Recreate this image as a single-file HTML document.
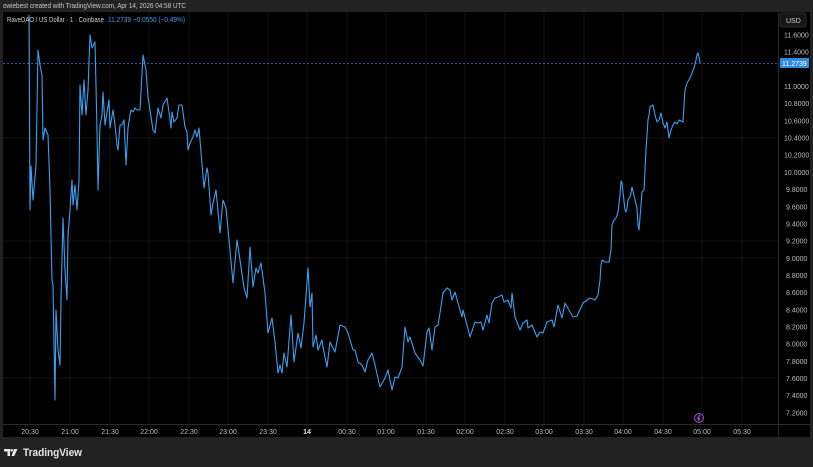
<!DOCTYPE html>
<html><head><meta charset="utf-8"><style>
html,body{margin:0;padding:0;background:#222223;width:813px;height:467px;overflow:hidden;font-family:"Liberation Sans",sans-serif}
svg{position:absolute;left:0;top:0}
</style></head><body>
<svg width="813" height="467" viewBox="0 0 813 467" font-family="Liberation Sans, sans-serif">
<text x="3" y="8" font-size="7" fill="#c8c8c8" textLength="183" lengthAdjust="spacingAndGlyphs">owiebest created with TradingView.com, Apr 14, 2026 04:58 UTC</text>
<rect x="3" y="12" width="807" height="425" fill="#000"/>
<g stroke="#121212" stroke-width="1">
<line x1="30" y1="12" x2="30" y2="424"/><line x1="70" y1="12" x2="70" y2="424"/><line x1="110" y1="12" x2="110" y2="424"/><line x1="149" y1="12" x2="149" y2="424"/><line x1="189" y1="12" x2="189" y2="424"/><line x1="228" y1="12" x2="228" y2="424"/><line x1="268" y1="12" x2="268" y2="424"/><line x1="307" y1="12" x2="307" y2="424"/><line x1="347" y1="12" x2="347" y2="424"/><line x1="386" y1="12" x2="386" y2="424"/><line x1="426" y1="12" x2="426" y2="424"/><line x1="465" y1="12" x2="465" y2="424"/><line x1="505" y1="12" x2="505" y2="424"/><line x1="544" y1="12" x2="544" y2="424"/><line x1="584" y1="12" x2="584" y2="424"/><line x1="623" y1="12" x2="623" y2="424"/><line x1="663" y1="12" x2="663" y2="424"/><line x1="702" y1="12" x2="702" y2="424"/><line x1="742" y1="12" x2="742" y2="424"/>
<line x1="3" y1="138" x2="778" y2="138"/><line x1="3" y1="241" x2="778" y2="241"/><line x1="3" y1="258" x2="778" y2="258"/><line x1="3" y1="378" x2="778" y2="378"/>
</g>
<line x1="3" y1="424.5" x2="810" y2="424.5" stroke="#2a2a2a"/>
<line x1="778.5" y1="12" x2="778.5" y2="437" stroke="#2a2a2a"/>
<line x1="3" y1="63.5" x2="778" y2="63.5" stroke="#2a7fd0" stroke-dasharray="2,2" stroke-width="0.8"/>
<polyline fill="none" stroke="#3b9ff0" stroke-width="1.1" stroke-linejoin="round" points="29,15 30,210 31,166 33,200 36,165 38,50 40,65 42,75 43,140 45,128 48,135 50,190 52,280 53,285 55,400 56,310 58,350 60,365 61,300 63,218 65,270 67,300 68,235 70,210 72,180 73,205 75,185 77,210 79,180 80,85 82,115 84,80 86,115 88,90 90,35 92,48 95,42 97,130 98,190 100,125 102,115 103,92 105,125 107,112 109,100 110,128 113,110 115,125 117,145 118,150 120,125 122,125 124,120 126,165 128,128 130,115 131,110 133,112 135,108 137,110 140,110 143,55 146,70 148,97 153,130 155,133 158,108 161,118 163,105 167,98 169,112 171,128 172,112 174,122 177,118 179,105 182,105 185,127 187,132 188,150 190,143 193,137 195,130 197,137 199,128 204,188 207,168 208,173 211,215 213,203 216,190 220,233 223,200 226,208 229,240 233,283 237,240 240,260 244,288 247,298 250,247 253,287 256,268 258,273 261,263 265,293 268,333 272,318 275,342 278,373 280,365 282,373 284,353 287,367 291,315 294,362 298,333 301,348 304,323 308,268 310,307 312,293 313,347 316,335 318,350 322,340 323,347 327,367 330,342 335,352 340,325 345,327 348,333 353,350 355,350 358,362 362,365 365,372 368,360 372,353 375,365 380,387 385,378 388,370 392,390 395,377 398,378 402,367 405,327 408,342 410,337 415,353 420,360 423,366 427,332 429,328 432,350 435,327 438,325 440,313 443,293 447,288 450,290 452,300 455,292 458,303 462,317 463,310 467,325 470,337 475,322 478,323 481,322 483,330 487,315 489,323 492,303 495,298 498,297 502,295 504,302 508,300 511,308 512,293 515,317 520,330 523,323 527,320 528,328 532,325 537,337 540,332 543,333 547,322 552,320 554,327 558,305 562,318 565,303 570,312 573,317 577,316 583,303 590,298 595,300 598,295 600,280 601,265 602,260 605,262 607,262 609,262 611,250 612,225 614,220 616,218 618,212 620,195 621,181 622,183 625,210 626,212 627,208 628,200 630,197 631,193 632,187 635,200 637,208 638,225 639,230 641,205 642,192 644,190 646,150 648,120 649,115 650,107 653,105 655,115 657,122 659,120 661,113 663,123 665,128 667,122 669,138 671,130 673,125 675,122 677,124 679,120 683,122 685,90 687,83 690,78 692,73 694,68 696,60 697,55 698,53 700,62 700,63"/>
<text x="7" y="22" font-size="7" fill="#d0d0d0" textLength="97" lengthAdjust="spacingAndGlyphs">RaveDAO / US Dollar · 1 · Coinbase</text>
<text x="108" y="22" font-size="7" fill="#3b9ff0" textLength="77" lengthAdjust="spacingAndGlyphs">11.2739  −0.0550 (−0.49%)</text>
<rect x="780" y="13" width="26" height="14" rx="2" fill="#161616" stroke="#2a2a2a"/>
<text x="786" y="23" font-size="7" fill="#cfcfcf">USD</text>
<g font-size="7" fill="#bdbdbd">
<text x="784" y="37.5">11.6000</text><text x="784" y="54.7">11.4000</text><text x="784" y="89">11.0000</text><text x="784" y="106.2">10.8000</text><text x="784" y="123.4">10.6000</text><text x="784" y="140.6">10.4000</text><text x="784" y="157.7">10.2000</text><text x="784" y="174.9">10.0000</text><text x="786" y="192.1">9.8000</text><text x="786" y="209.3">9.6000</text><text x="786" y="226.4">9.4000</text><text x="786" y="243.6">9.2000</text><text x="786" y="260.8">9.0000</text><text x="786" y="278">8.8000</text><text x="786" y="295.1">8.6000</text><text x="786" y="312.3">8.4000</text><text x="786" y="329.5">8.2000</text><text x="786" y="346.7">8.0000</text><text x="786" y="363.8">7.8000</text><text x="786" y="381">7.6000</text><text x="786" y="398.2">7.4000</text><text x="786" y="415.4">7.2000</text>
</g>
<rect x="780" y="58" width="29" height="10" fill="#2f8be0"/>
<text x="782" y="66" font-size="7" fill="#fff">11.2739</text>
<g font-size="7" fill="#bdbdbd" text-anchor="middle">
<text x="30" y="434">20:30</text><text x="70" y="434">21:00</text><text x="110" y="434">21:30</text><text x="149" y="434">22:00</text><text x="189" y="434">22:30</text><text x="228" y="434">23:00</text><text x="268" y="434">23:30</text><text x="307" y="434" font-weight="bold" fill="#e0e0e0">14</text><text x="347" y="434">00:30</text><text x="386" y="434">01:00</text><text x="426" y="434">01:30</text><text x="465" y="434">02:00</text><text x="505" y="434">02:30</text><text x="544" y="434">03:00</text><text x="584" y="434">03:30</text><text x="623" y="434">04:00</text><text x="663" y="434">04:30</text><text x="702" y="434">05:00</text><text x="742" y="434">05:30</text>
</g>
<circle cx="699" cy="418" r="4.5" fill="#1a0f22" stroke="#9b4fc8" stroke-width="1"/>
<path d="M700 415 L697.5 418.5 L699.5 418.5 L698 421" fill="none" stroke="#b66ee0" stroke-width="0.8"/>
<g fill="#e6e6e6">
<path d="M4 449 H10 V456 H7.5 V451.5 H4 Z"/><circle cx="11.7" cy="450.3" r="1.3"/><path d="M14 449 H17.5 L14.3 456 H11.5 Z"/>
</g>
<text x="23" y="456" font-size="11" font-weight="bold" fill="#e6e6e6" textLength="59" lengthAdjust="spacingAndGlyphs">TradingView</text>
</svg>
</body></html>
